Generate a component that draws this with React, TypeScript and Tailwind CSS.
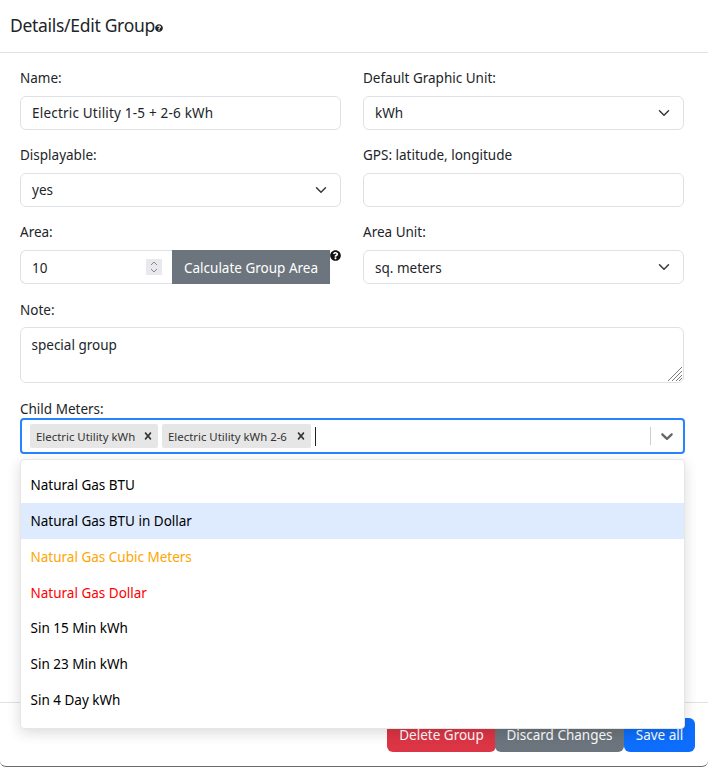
import { ReactNode } from "react";
import { FaQuestionCircle } from "react-icons/fa";

const meters = [
  { name: "Natural Gas BTU", color: "text-black" },
  { name: "Natural Gas BTU in Dollar", color: "text-black", active: true },
  { name: "Natural Gas Cubic Meters", color: "text-[#ffa500]" },
  { name: "Natural Gas Dollar", color: "text-[#ff0000]" },
  { name: "Sin 15 Min kWh", color: "text-black" },
  { name: "Sin 23 Min kWh", color: "text-black" },
  { name: "Sin 4 Day kWh", color: "text-black" },
];

function Chevron() {
  return (
    <svg viewBox="0 0 16 16" className="w-[12px] h-[12px] shrink-0" fill="none" stroke="#343a40" strokeWidth="2" strokeLinecap="round" strokeLinejoin="round">
      <path d="m2 5 6 6 6-6" />
    </svg>
  );
}

function Label({ children }: { children: ReactNode }) {
  return <div className="h-[20px] leading-[20px] mb-[8px]">{children}</div>;
}

function Select({ value, low }: { value: string; low?: boolean }) {
  return (
    <div className="h-[34px] flex items-center justify-between pl-[11px] pr-[13px] border border-[#dee2e6] rounded-[6px] bg-white">
      <span className={low ? "pt-[2px]" : ""}>{value}</span>
      <Chevron />
    </div>
  );
}

function TextInput({ value }: { value: string }) {
  return (
    <input
      readOnly
      value={value}
      className="block w-full h-[34px] px-[11px] tracking-[0.2px] border border-[#dee2e6] rounded-[6px] bg-white outline-none"
    />
  );
}

function Chip({ label, width }: { label: string; width: string }) {
  return (
    <div className={`${width} h-[24px] flex items-center justify-between pl-[6px] pr-[3px] bg-[#e6e6e6] rounded-[2px] text-[11.4px] text-[#333333]`}>
      <span className="pt-[1px]">{label}</span>
      <svg viewBox="0 0 20 20" className="w-[14px] h-[14px] shrink-0" fill="#333333">
        <path d="M14.348 14.849c-.469.469-1.229.469-1.697 0L10 11.819l-2.651 3.029c-.469.469-1.229.469-1.697 0-.469-.469-.469-1.229 0-1.697L8.41 10 5.651 6.849c-.469-.469-.469-1.228 0-1.697s1.228-.469 1.697 0L10 8.183l2.651-3.031c.469-.469 1.228-.469 1.697 0s.469 1.229 0 1.697L11.59 10l2.758 3.152c.469.469.469 1.228 0 1.697z" />
      </svg>
    </div>
  );
}

export default function App() {
  return (
    <div
      className="w-[708px] h-[767px] flex flex-col bg-white text-[#212529] text-[13.5px] border-b border-[#6b6b6b] rounded-b-[6px] overflow-hidden"
      style={{ fontFamily: '"Noto Sans", sans-serif' }}
    >
      {/* Header */}
      <div className="h-[53px] shrink-0 flex items-center pl-[10px] pb-[3px] border-b border-[#dee2e6]">
        <h1 className="text-[17.5px] leading-[24px] tracking-[-0.3px]">Details/Edit Group</h1>
        <FaQuestionCircle className="w-[8px] h-[8px] mt-[7px] text-[#212529]" />
      </div>

      {/* Body */}
      <div className="flex-1 relative px-[20px] pt-[15px]">
        <div className="grid grid-cols-[321px_321px] gap-x-[22px] gap-y-[15px]">
          <div>
            <Label>Name:</Label>
            <TextInput value="Electric Utility 1-5 + 2-6 kWh" />
          </div>
          <div>
            <Label>Default Graphic Unit:</Label>
            <Select value="kWh" />
          </div>
          <div>
            <Label>Displayable:</Label>
            <Select value="yes" />
          </div>
          <div>
            <Label>GPS: latitude, longitude</Label>
            <TextInput value="" />
          </div>
          <div className="relative">
            <Label>Area:</Label>
            <div className="flex h-[34px] w-[310px]">
              <div className="w-[152px] flex items-center justify-between pl-[11px] pr-[10px] border border-r-0 border-[#dee2e6] rounded-l-[6px]">
                <span className="pt-[2px]">10</span>
                <div className="w-[16px] h-[16px] bg-[#e9e9ed] flex items-center justify-center">
                  <svg viewBox="0 0 16 16" className="w-[16px] h-[16px]" fill="none" stroke="#8a8a8a" strokeWidth="1">
                    <path d="m5 6 3-3 3 3M5 10l3 3 3-3" />
                  </svg>
                </div>
              </div>
              <button className="w-[158px] pt-[2px] bg-[#6c757d] text-white">Calculate Group Area</button>
            </div>
            <FaQuestionCircle className="absolute left-[310px] top-[28px] w-[11px] h-[11px] text-[#111111]" />
          </div>
          <div>
            <Label>Area Unit:</Label>
            <Select value="sq. meters" low />
          </div>
        </div>

        <div className="mt-[16px]">
          <Label>Note:</Label>
          <div className="relative w-[664px] h-[56px] -mt-[1px]">
            <textarea
              readOnly
              value="special group"
              className="block w-full h-full px-[10.5px] py-[7px] border border-[#dee2e6] rounded-[6px] outline-none resize-none"
            />
            {/* resize grip */}
            <svg viewBox="0 0 14 14" className="absolute right-[2px] bottom-[2px] w-[14px] h-[14px]" stroke="#7a7a7a" strokeWidth="1">
              <path d="M0 14 14 0M4 14 14 4M8 14l6-6M11 14l3-3" />
            </svg>
          </div>
        </div>

        <div className="mt-[16px] h-[20px] leading-[20px]">Child Meters:</div>

        {/* Child meters picker */}
        <div className="mt-[-1px] w-[665px] h-[36px] flex items-center border-2 border-[#2684ff] rounded-[4px] pl-[8px]">
          <div className="flex gap-[4px] items-center flex-1">
            <Chip label="Electric Utility kWh" width="w-[128px]" />
            <Chip label="Electric Utility kWh 2-6" width="w-[149px]" />
            <div className="w-px h-[19px] bg-[#222222]" />
          </div>
          <div className="w-px h-[18px] bg-[#cccccc]" />
          <div className="w-[32px] flex justify-center">
            <svg viewBox="0 0 20 20" className="w-[20px] h-[20px]" fill="#666666">
              <path d="M4.516 7.548c.436-.446 1.043-.481 1.576 0L10 11.295l3.908-3.747c.533-.481 1.141-.446 1.574 0 .436.445.408 1.197 0 1.615-.406.418-4.695 4.502-4.695 4.502a1.095 1.095 0 0 1-1.576 0S4.924 9.581 4.516 9.163c-.409-.418-.436-1.17 0-1.615z" />
            </svg>
          </div>
        </div>

        {/* Open menu */}
        <div className="absolute z-10 left-[20px] top-[406px] w-[665px] h-[270px] pt-[7px] bg-white border border-[#e6e6e6] rounded-[4px] shadow-[0_4px_14px_rgba(0,0,0,0.14)] overflow-hidden">
          {meters.map((m) => (
            <div
              key={m.name}
              className={`h-[35.8px] flex items-center pl-[9.5px] pt-[1px] ${m.color} ${m.active ? "bg-[#deebff]" : ""}`}
            >
              {m.name}
            </div>
          ))}
        </div>
      </div>

      {/* Footer */}
      <div className="h-[64px] shrink-0 flex justify-end items-start pt-[15px] pr-[13px] border-t border-[#dee2e6]">
        <button className="w-[109px] h-[34px] bg-[#dc3545] text-white rounded-[6px]">Delete Group</button>
        <button className="w-[129px] h-[34px] -ml-px bg-[#6c757d] text-white rounded-[6px]">Discard Changes</button>
        <button className="w-[71px] h-[34px] bg-[#0d6efd] text-white rounded-[6px]">Save all</button>
      </div>
    </div>
  );
}
